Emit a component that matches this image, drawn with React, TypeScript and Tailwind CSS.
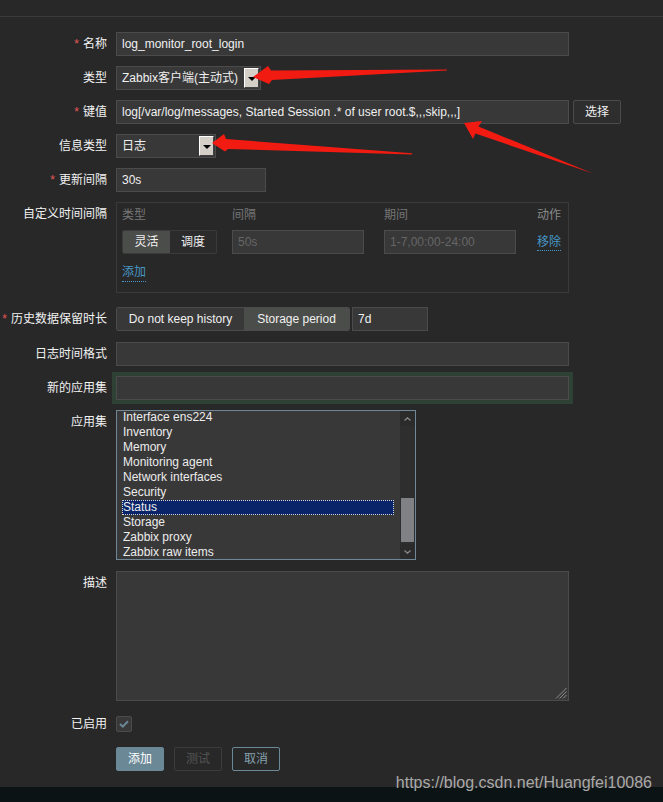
import React from "react";

const box =
  "h-6 bg-[#383838] border border-[#4b4b4b] px-[5px] leading-[22px] text-[12px] whitespace-nowrap overflow-hidden";
const field = `${box} text-[#f0f0f0]`;

const apps = [
  "Interface ens224",
  "Inventory",
  "Memory",
  "Monitoring agent",
  "Network interfaces",
  "Security",
  "Status",
  "Storage",
  "Zabbix proxy",
  "Zabbix raw items",
];

function Label({ children, req }: { children: React.ReactNode; req?: boolean }) {
  return (
    <div className="w-[107px] shrink-0 h-6 leading-6 text-right text-[12px] text-[#f2f2f2] whitespace-nowrap">
      {req && <span className="text-[#e45959] mr-[4px]">*</span>}
      {children}
    </div>
  );
}

function Row({ label, req, className = "", children }: { label: React.ReactNode; req?: boolean; className?: string; children: React.ReactNode }) {
  return (
    <div className={`flex items-start ${className}`}>
      <Label req={req}>{label}</Label>
      <div className="ml-[9px]">{children}</div>
    </div>
  );
}

function Select({ value, width }: { value: string; width: string }) {
  return (
    <div className={`flex h-6 bg-[#383838] border border-[#4b4b4b] ${width}`}>
      <div className="flex-1 pl-[5px] leading-[22px] text-[12px] text-[#f0f0f0] whitespace-nowrap">{value}</div>
      <div className="my-[1px] mr-[1px] w-[15px] bg-[#d4d0c8] border-t border-l border-t-white border-l-white border-r border-b border-r-[#404040] border-b-[#404040] flex items-center justify-center">
        <div className="mt-[2px] w-0 h-0 border-l-[4px] border-r-[4px] border-t-[4px] border-l-transparent border-r-transparent border-t-black" />
      </div>
    </div>
  );
}

function Arrows() {
  return (
    <svg className="absolute inset-0 pointer-events-none" width="663" height="802" viewBox="0 0 663 802">
      <g fill="#f21b12">
        <polygon points="253,77 268,66 271,70.5 447,69.5 447,70.6 272,80 269,84" />
        <polygon points="212,143 224,134 226,139 412,153.3 412,154.6 228,149 225,151.5" />
        <polygon points="464,123 482,121 478.4,126.4 593,173.6 475.4,133.6 473,139" />
      </g>
    </svg>
  );
}

export default function App() {
  return (
    <div className="relative w-[663px] h-[802px] overflow-hidden bg-[#282828] font-['Liberation_Sans','Noto_Sans_CJK_SC',sans-serif] text-[12px] text-[#f0f0f0] flex flex-col">
      <div className="h-[17px] shrink-0 border-b border-[#3a3a3a]" />

      <div className="pt-[15px] flex flex-col">
        <Row label="名称" req>
          <div className={`${field} w-[453px]`}>log_monitor_root_login</div>
        </Row>

        <Row label="类型" className="mt-[10px]">
          <Select value="Zabbix客户端(主动式)" width="w-[145px]" />
        </Row>

        <Row label="键值" req className="mt-[10px]">
          <div className="flex gap-[4px]">
            <div className={`${field} w-[453px]`}>log[/var/log/messages, Started Session .* of user root.$,,,skip,,,]</div>
            <div className="h-6 w-[48px] border border-[#4b4b4b] bg-[#2e2e2e] rounded-[2px] text-center leading-[22px]">选择</div>
          </div>
        </Row>

        <Row label="信息类型" className="mt-[10px]">
          <Select value="日志" width="w-[100px]" />
        </Row>

        <Row label="更新间隔" req className="mt-[10px]">
          <div className={`${field} w-[150px]`}>30s</div>
        </Row>

        <Row label="自定义时间间隔" className="mt-[10px]">
          <div className="w-[453px] h-[91px] border border-[#3a3a3a] pl-[5px] pr-[7px] pt-[4px]">
            <div className="flex h-4 leading-4 text-[#767676]">
              <div className="w-[95px]">类型</div>
              <div className="ml-[15px] w-[132px]">间隔</div>
              <div className="ml-[20px] w-[132px]">期间</div>
              <div className="ml-auto text-[#8a8a8a]">动作</div>
            </div>
            <div className="flex mt-[7px] items-start">
              <div className="flex w-[95px] h-6 border border-[#3a3a3a] rounded-[2px] overflow-hidden leading-[22px]">
                <div className="w-[47px] bg-[#4b4d4a] text-center">灵活</div>
                <div className="flex-1 bg-[#2b2b2b] text-center">调度</div>
              </div>
              <div className={`${box} ml-[15px] w-[132px] text-[#666666]`}>50s</div>
              <div className={`${box} ml-[20px] w-[132px] text-[#666666]`}>1-7,00:00-24:00</div>
              <div className="ml-auto mt-[4px] leading-4 text-[#4796c4] border-b border-dotted border-[#4796c4]">移除</div>
            </div>
            <div className="mt-[9px]">
              <span className="inline-block leading-[18px] text-[#4796c4] border-b border-dotted border-[#4796c4]">添加</span>
            </div>
          </div>
        </Row>

        <Row label="历史数据保留时长" req className="mt-[14px]">
          <div className="flex gap-[2px]">
            <div className="flex h-6 border border-[#4b4b4b] rounded-[2px] overflow-hidden leading-[22px]">
              <div className="w-[127px] bg-[#383838] text-center">Do not keep history</div>
              <div className="w-[105px] bg-[#4b4d4a] text-center">Storage period</div>
            </div>
            <div className={`${field} w-[76px]`}>7d</div>
          </div>
        </Row>

        <Row label="日志时间格式" className="mt-[11px]">
          <div className={`${field} w-[453px]`} />
        </Row>

        <Row label="新的应用集" className="mt-[10px]">
          <div className={`${field} w-[453px] shadow-[0_0_0_4px_#2d4234]`} />
        </Row>

        <Row label="应用集" className="mt-[10px]">
          <div className="w-[300px] h-[150px] border border-[#6f8797] bg-[#383838] flex">
            <div className="flex-1 overflow-hidden pl-[5px] pr-[6px]">
              <div className="-mt-[1px]">
                {apps.map((a) => (
                  <div
                    key={a}
                    className={`h-[15px] leading-[15px] pl-[1px] text-[#ececec] whitespace-nowrap ${
                      a === "Status" ? "bg-[#0a246a] outline-1 outline-dotted outline-[#d8d8d8] -outline-offset-1" : ""
                    }`}
                  >
                    {a}
                  </div>
                ))}
              </div>
            </div>
            <div className="w-[15px] bg-[#2e2e2e] flex flex-col">
              <div className="h-[15px] bg-[#2b2b2b] flex items-center justify-center">
                <svg width="7" height="4" viewBox="0 0 7 4">
                  <path d="M0.5 3.5 L3.5 0.8 L6.5 3.5" fill="none" stroke="#8a8a8a" strokeWidth="1.2" />
                </svg>
              </div>
              <div className="flex-1">
                <div className="mt-[72px] h-[44px] mx-[1px] bg-[#808185]" />
              </div>
              <div className="h-[15px] bg-[#2b2b2b] flex items-center justify-center">
                <svg width="7" height="4" viewBox="0 0 7 4">
                  <path d="M0.5 0.5 L3.5 3.2 L6.5 0.5" fill="none" stroke="#8a8a8a" strokeWidth="1.2" />
                </svg>
              </div>
            </div>
          </div>
        </Row>

        <Row label="描述" className="mt-[11px]">
          <div className="relative w-[453px] h-[130px] bg-[#383838] border border-[#4b4b4b]">
            <svg className="absolute right-[1px] bottom-[1px]" width="12" height="12" viewBox="0 0 12 12">
              <g stroke="#8c8c8c" strokeWidth="1">
                <line x1="11.5" y1="1" x2="1" y2="11.5" />
                <line x1="11.5" y1="4.5" x2="4.5" y2="11.5" />
                <line x1="11.5" y1="8" x2="8" y2="11.5" />
              </g>
            </svg>
          </div>
        </Row>

        <div className="flex items-center mt-[15px] h-4">
          <div className="w-[107px] text-right leading-4 text-[#f2f2f2]">已启用</div>
          <div className="ml-[9px] w-4 h-4 bg-[#383838] border border-[#4b4b4b] rounded-[2px] flex items-center justify-center">
            <svg width="10" height="8" viewBox="0 0 10 8">
              <path d="M1 4 L3.8 6.6 L9 1.2" fill="none" stroke="#6b8897" strokeWidth="2" />
            </svg>
          </div>
        </div>

        <div className="flex mt-[15px] ml-[116px] gap-[10px] leading-[22px]">
          <div className="w-[48px] h-6 rounded-[2px] bg-[#6b8896] border border-[#6b8896] text-center text-white">添加</div>
          <div className="w-[48px] h-6 rounded-[2px] border border-[#3c3c3c] text-center text-[#555555]">测试</div>
          <div className="w-[48px] h-6 rounded-[2px] border border-[#6b8896] text-center text-[#86a1ae]">取消</div>
        </div>
      </div>

      <div className="flex-1" />
      <div className="h-[15px] shrink-0 bg-[#0b1315]" />

      <div className="absolute right-[11px] top-[773px] text-[16px] leading-[19px] text-[#b8b8b8] opacity-90 pointer-events-none">
        https://blog.csdn.net/Huangfei10086
      </div>

      <Arrows />
    </div>
  );
}
